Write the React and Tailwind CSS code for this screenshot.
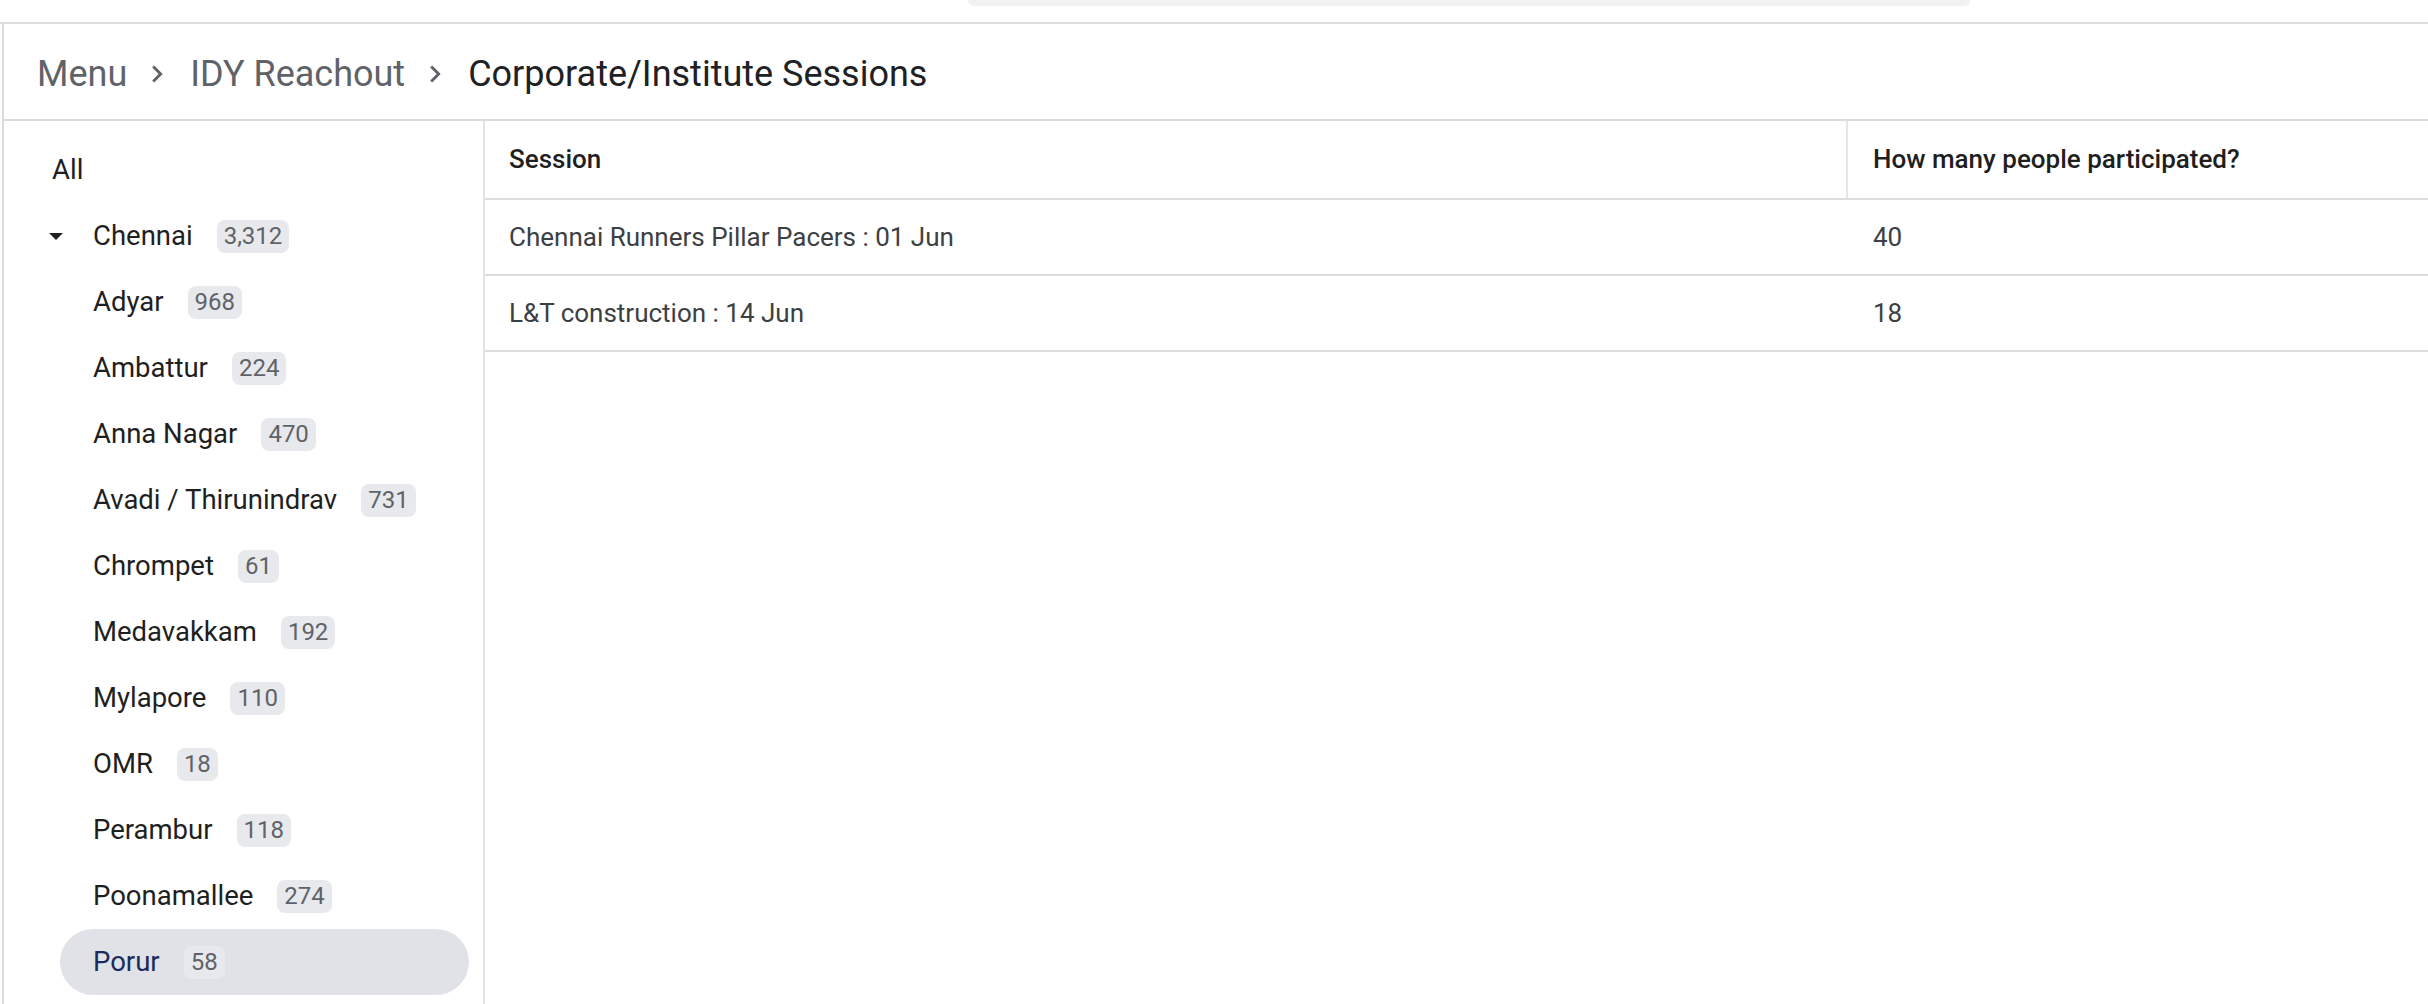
import React from "react";

const branches = [
    ["Adyar", "968"],
    ["Ambattur", "224"],
    ["Anna Nagar", "470"],
    ["Avadi / Thirunindrav", "731"],
    ["Chrompet", "61"],
    ["Medavakkam", "192"],
    ["Mylapore", "110"],
    ["OMR", "18"],
    ["Perambur", "118"],
    ["Poonamallee", "274"],
    ["Porur", "58"],
];

const sessions = [
    ["Chennai Runners Pillar Pacers : 01 Jun", "40"],
    ["L&T construction : 14 Jun", "18"],
];

function Chevron() {
    return (
        <svg width="34" height="34" viewBox="0 0 24 24" className="ml-[13px] mr-[16px] shrink-0" fill="#5f6368">
            <path d="M10 6 8.59 7.41 13.17 12l-4.58 4.59L10 18l6-6z" />
        </svg>
    );
}

function Badge({ count }) {
    return (
        <span className="ml-[24px] h-[33px] px-[7px] rounded-[8px] flex items-center text-[24px] text-[#5f6368] bg-[#e8e9ed]">
            {count}
        </span>
    );
}

export default function App() {
    const selected = "Porur";

    return (
        <div className="w-[2428px] h-[1004px] overflow-hidden bg-white font-['Roboto',sans-serif]">
            {/* top strip */}
            <div className="h-[24px] border-b-2 border-[#dadce0]">
                <div className="ml-[968px] w-[1002px] h-[6px] rounded-b-[18px] bg-[#f1f1f1]" />
            </div>

            <div className="ml-[2px] h-[980px] border-l-2 border-[#dadce0] flex flex-col">
                {/* Breadcrumb */}
                <div className="h-[97px] shrink-0 border-b-2 border-[#dadce0] flex items-center pl-[33px] pt-[4px] text-[36px]">
                    <span className="text-[#5f6368]">Menu</span>
                    <Chevron />
                    <span className="text-[#5f6368]">IDY Reachout</span>
                    <Chevron />
                    <span className="text-[#202124]">Corporate/Institute Sessions</span>
                </div>

                <div className="flex flex-1 min-h-0">
                    {/* Sidebar */}
                    <div className="w-[481px] shrink-0 border-r-2 border-[#e3e3e3] pt-[16px] text-[27.5px] text-[#1f1f1f]">
                        <div className="h-[66px] flex items-center pl-[48px]">All</div>
                        <div className="h-[66px] flex items-center pl-[45px]">
                            <svg width="14" height="7" viewBox="0 0 14 7" className="shrink-0">
                                <path d="M0 0h14L7 7z" fill="#1f1f1f" />
                            </svg>
                            <span className="ml-[30px]">Chennai</span>
                            <Badge count="3,312" />
                        </div>
                        {branches.map(([name, count]) => (
                            <div
                                key={name}
                                className={`h-[66px] ml-[56px] mr-[14px] pl-[33px] flex items-center rounded-full ${
                                    name === selected ? "bg-[#e1e2e7] text-[#1b2b5c]" : ""
                                }`}
                            >
                                <span>{name}</span>
                                <Badge count={count} />
                            </div>
                        ))}
                    </div>

                    {/* Table */}
                    <div className="flex-1">
                        <div className="h-[79px] flex border-b-2 border-[#dadce0] text-[26px] font-medium text-[#1f1f1f]">
                            <div className="w-[1361px] pl-[24px] flex items-center">Session</div>
                            <div className="flex-1 border-l-2 border-[#e6e6e6] pl-[25px] flex items-center">
                                How many people participated?
                            </div>
                        </div>
                        {sessions.map(([session, count]) => (
                            <div
                                key={session}
                                className="h-[76px] flex border-b-2 border-[#dadce0] text-[26px] text-[#3c4043]"
                            >
                                <div className="w-[1361px] pl-[24px] flex items-center">{session}</div>
                                <div className="flex-1 pl-[27px] flex items-center">{count}</div>
                            </div>
                        ))}
                    </div>
                </div>
            </div>
        </div>
    );
}
